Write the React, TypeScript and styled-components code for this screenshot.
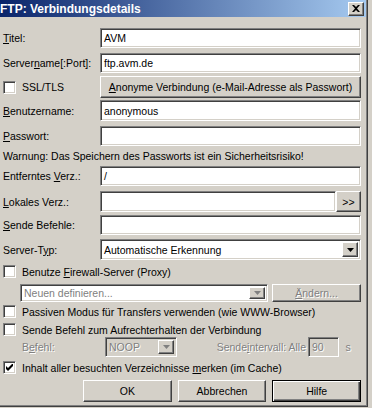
import styled, { createGlobalStyle, css } from 'styled-components';

const GlobalStyle = createGlobalStyle`
  html, body {
    margin: 0;
    padding: 0;
    background: #d4d0c8;
  }
  body {
    font-family: 'Liberation Sans', Arial, sans-serif;
    font-size: 10.5px;
    color: #000;
  }
`;

const sunken = css`
  box-sizing: border-box;
  border: 1px solid;
  border-color: #808080 #ffffff #ffffff #808080;
  box-shadow: inset 1px 1px #404040, inset -1px -1px #d4d0c8;
`;

const raised = css`
  box-sizing: border-box;
  border: 1px solid;
  border-color: #ffffff #404040 #404040 #ffffff;
  box-shadow: inset -1px -1px #808080;
  background: #d4d0c8;
`;

const disabledText = css`
  color: #808080;
  text-shadow: 1px 1px #ffffff;
`;

const Window = styled.div`
  box-sizing: border-box;
  width: 368px;
  height: 407px;
  border-right: 1px solid #404040;
  border-bottom: 1px solid #404040;
  box-shadow: inset -1px -1px #808080;
  display: flex;
  flex-direction: column;
`;

const TitleBar = styled.div`
  height: 17px;
  margin-right: 1px;
  display: flex;
  align-items: center;
  justify-content: space-between;
  background: linear-gradient(to right, #0a246a, #a6caf0);
  color: #fff;
  font-weight: bold;
  font-size: 12px;
  padding-right: 2px;
`;

const CloseButton = styled.div`
  ${raised};
  width: 16px;
  height: 14px;
  display: flex;
  align-items: center;
  justify-content: center;
`;

const Body = styled.div`
  display: flex;
  flex-direction: column;
  padding: 0 6px 0 3px;
`;

const Row = styled.div<{ $top: number; $h: number }>`
  display: flex;
  align-items: center;
  margin-top: ${(p) => p.$top}px;
  height: ${(p) => p.$h}px;
`;

const Label = styled.label<{ $w?: number; $indent?: number; $disabled?: boolean; $align?: string }>`
  box-sizing: border-box;
  width: ${(p) => p.$w ?? 97}px;
  padding-left: ${(p) => p.$indent ?? 0}px;
  text-align: ${(p) => p.$align ?? 'left'};
  flex-shrink: 0;
  white-space: nowrap;
  ${(p) => p.$disabled && disabledText};
`;

const U = styled.span`
  text-decoration: underline;
`;

const TextField = styled.div<{ $w?: number; $disabled?: boolean }>`
  ${sunken};
  height: 100%;
  ${(p) => (p.$w ? `width: ${p.$w}px; flex-shrink: 0;` : 'flex: 1;')}
  background: ${(p) => (p.$disabled ? '#d4d0c8' : '#ffffff')};
  display: flex;
  align-items: center;
  padding-left: 3px;
  white-space: nowrap;
  ${(p) => p.$disabled && disabledText};
`;

const Button = styled.div<{ $w?: number; $default?: boolean; $disabled?: boolean }>`
  ${raised};
  height: 100%;
  ${(p) => (p.$w ? `width: ${p.$w}px; flex-shrink: 0;` : 'flex: 1;')}
  display: flex;
  align-items: center;
  justify-content: center;
  white-space: nowrap;
  ${(p) => p.$disabled && disabledText};
  ${(p) =>
    p.$default &&
    css`
      border: 1px solid #000;
      box-shadow: inset 1px 1px #ffffff, inset -1px -1px #404040, inset -2px -2px #808080;
    `};
`;

const ArrowButton = styled.div<{ $disabled?: boolean }>`
  ${raised};
  width: 16px;
  height: 100%;
  margin-left: auto;
  display: flex;
  align-items: center;
  justify-content: center;
  svg {
    fill: ${(p) => (p.$disabled ? '#808080' : '#000')};
  }
`;

const Combo = styled(TextField)`
  padding: 2px;
  padding-left: 3px;
`;

const Check = styled.div`
  ${sunken};
  width: 13px;
  height: 13px;
  background: #fff;
  flex-shrink: 0;
  display: flex;
  align-items: center;
  justify-content: center;
`;

const CheckText = styled.span`
  margin-left: 6px;
  white-space: nowrap;
`;

const Placeholder = styled.span`
  color: #808080;
`;

const Warning = styled.div`
  white-space: nowrap;
`;

const ButtonBar = styled.div`
  display: flex;
  gap: 6px;
  margin-left: 80px;
  width: 280px;
  height: 100%;
`;

const Gap = styled.span<{ $w: number }>`
  flex: 0 0 ${(p) => p.$w}px;
`;

const Arrow = () => (
  <svg width="7" height="4" viewBox="0 0 7 4">
    <path d="M0 0h7L3.5 4z" />
  </svg>
);

const CheckBox = ({ checked }: { checked?: boolean }) => (
  <Check>
    {checked && (
      <svg width="7" height="7" viewBox="0 0 7 7">
        <path d="M0 2v3l2 2 5-5V-1L2 4z" fill="#000" />
      </svg>
    )}
  </Check>
);

const App = () => (
  <>
    <GlobalStyle />
    <Window>
      <TitleBar>
        <span>FTP: Verbindungsdetails</span>
        <CloseButton>
          <svg width="8" height="7" viewBox="0 0 8 7">
            <path d="M0 0h2l2 2 2-2h2L5 3.5 8 7H6L4 5 2 7H0l3-3.5z" fill="#000" />
          </svg>
        </CloseButton>
      </TitleBar>
      <Body>
        <Row $top={11} $h={20}>
          <Label><U>T</U>itel:</Label>
          <TextField>AVM</TextField>
        </Row>
        <Row $top={5} $h={20}>
          <Label>Server<U>n</U>ame[:Port]:</Label>
          <TextField>ftp.avm.de</TextField>
        </Row>
        <Row $top={3} $h={22}>
          <Label>
            <Row $top={0} $h={13}>
              <CheckBox />
              <CheckText>SSL/TLS</CheckText>
            </Row>
          </Label>
          <Button><U>A</U>nonyme Verbindung (e-Mail-Adresse als Passwort)</Button>
        </Row>
        <Row $top={2} $h={21}>
          <Label><U>B</U>enutzername:</Label>
          <TextField>anonymous</TextField>
        </Row>
        <Row $top={5} $h={20}>
          <Label><U>P</U>asswort:</Label>
          <TextField />
        </Row>
        <Row $top={2} $h={15}>
          <Warning>Warnung: Das Speichern des Passworts ist ein Sicherheitsrisiko!</Warning>
        </Row>
        <Row $top={3} $h={20}>
          <Label>Entferntes <U>V</U>erz.:</Label>
          <TextField>/</TextField>
        </Row>
        <Row $top={5} $h={21}>
          <Label><U>L</U>okales Verz.:</Label>
          <TextField />
          <Button $w={25}>&gt;&gt;</Button>
        </Row>
        <Row $top={3} $h={20}>
          <Label><U>S</U>ende Befehle:</Label>
          <TextField />
        </Row>
        <Row $top={4} $h={21}>
          <Label>Server-T<U>y</U>p:</Label>
          <Combo>
            Automatische Erkennung
            <ArrowButton><Arrow /></ArrowButton>
          </Combo>
        </Row>
        <Row $top={3} $h={17}>
          <CheckBox />
          <CheckText>Benutze <U>F</U>irewall-Server (Proxy)</CheckText>
        </Row>
        <Row $top={4} $h={18}>
          <Gap $w={17} />
          <Combo $w={248}>
            <Placeholder>Neuen definieren...</Placeholder>
            <ArrowButton $disabled><Arrow /></ArrowButton>
          </Combo>
          <Gap $w={4} />
          <Button $disabled><U>Ä</U>ndern...</Button>
        </Row>
        <Row $top={2} $h={15}>
          <CheckBox />
          <CheckText>Passiven Modus für Transfers verwenden (wie WWW-Browser)</CheckText>
        </Row>
        <Row $top={3} $h={15}>
          <CheckBox />
          <CheckText>Sende Befehl zum Aufrechterhalten der Verbindung</CheckText>
        </Row>
        <Row $top={0} $h={20}>
          <Label $w={102} $indent={19} $disabled>B<U>e</U>fehl:</Label>
          <Combo $w={72} $disabled>
            NOOP
            <ArrowButton $disabled><Arrow /></ArrowButton>
          </Combo>
          <Label $w={131} $align="right" $disabled style={{ paddingRight: 2 }}>
            Sende<U>i</U>ntervall: Alle
          </Label>
          <TextField $w={31} $disabled>90</TextField>
          <Label $w={18} $align="center" $disabled>s</Label>
        </Row>
        <Row $top={3} $h={15}>
          <CheckBox checked />
          <CheckText>Inhalt aller besuchten Verzeichnisse <U>m</U>erken (im Cache)</CheckText>
        </Row>
        <Row $top={5} $h={22}>
          <ButtonBar>
            <Button>OK</Button>
            <Button>Abbrechen</Button>
            <Button $default>Hilfe</Button>
          </ButtonBar>
        </Row>
      </Body>
    </Window>
  </>
);

export default App;
